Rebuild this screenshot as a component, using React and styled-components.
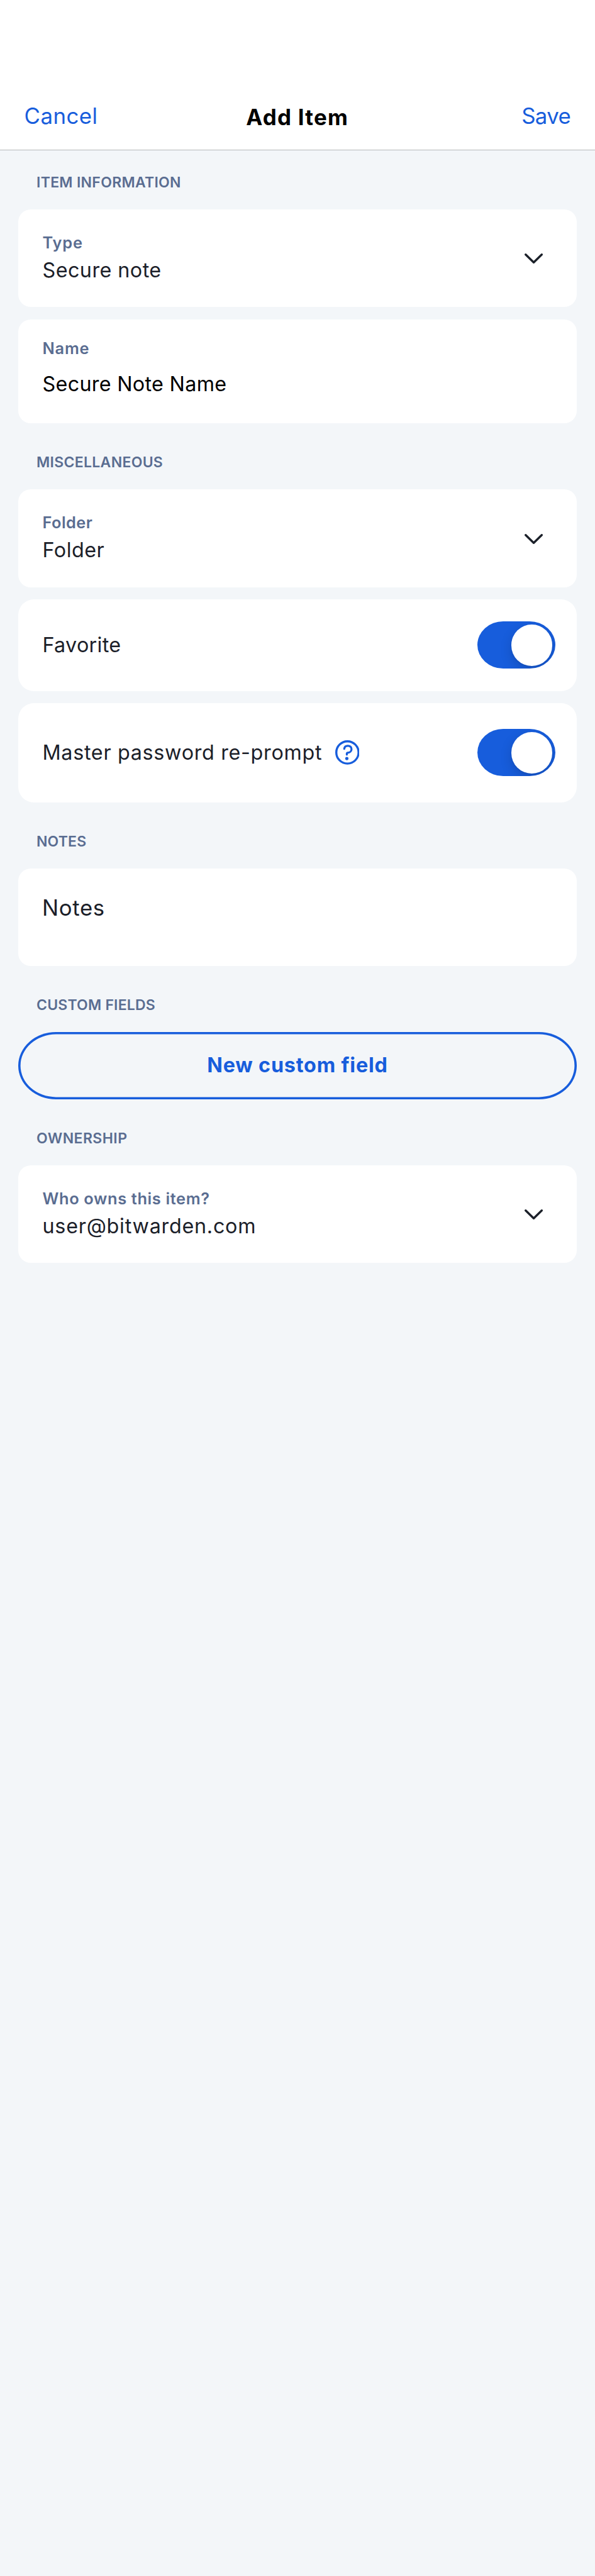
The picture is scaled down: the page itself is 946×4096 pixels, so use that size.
import React from 'react';
import styled, { createGlobalStyle, css } from 'styled-components';

const color = {
  page: '#f3f6f9',
  surface: '#ffffff',
  accent: '#175ddc',
  text: '#1b2029',
  label: '#5a6d91',
  rule: '#b4b7b9',
};

const GlobalStyle = createGlobalStyle`
  * { box-sizing: border-box; }
  body {
    margin: 0;
    background: ${color.page};
    font-family: Inter, "Liberation Sans", sans-serif;
    color: ${color.text};
  }
  button {
    border: 0;
    padding: 0;
    background: none;
    font: inherit;
    cursor: pointer;
  }
`;

const tracking = css`
  letter-spacing: ${(p) => p.$track || 0}px;
`;

const Screen = styled.main`
  width: 946px;
  min-height: 4096px;
  background: ${color.page};
`;

const Header = styled.header`
  display: grid;
  grid-template-columns: 1fr auto 1fr;
  align-items: start;
  height: 239px;
  padding: 162px 39px 0 38.5px;
  background: ${color.surface};
  border-bottom: 1px solid ${color.rule};
`;

const HeaderAction = styled.button`
  justify-self: ${(p) => p.$side};
  color: ${color.accent};
  font-size: 34.8px;
  line-height: 44px;
  white-space: nowrap;
  ${tracking}
`;

const HeaderTitle = styled.h1`
  margin: 2px 0 0;
  color: #000;
  font-size: 34.9px;
  font-weight: 700;
  line-height: 44px;
  ${tracking}
`;

const Form = styled.form`
  padding: 0 29px;
`;

const SectionBlock = styled.section`
  display: flex;
  flex-direction: column;
  gap: 19.4px;
`;

const SectionTitle = styled.h2`
  margin: ${(p) => (p.$first ? 37 : 48.1)}px 0 9.6px 29px;
  color: ${color.label};
  font-size: 23px;
  font-weight: 600;
  line-height: 28px;
  ${tracking}
`;

const Card = styled.div`
  display: flex;
  justify-content: space-between;
  height: ${(p) => p.$height || 155.2}px;
  border-radius: ${(p) => p.$radius || 20}px;
  background: ${color.surface};
`;

const FieldText = styled.div`
  display: flex;
  flex-direction: column;
  gap: ${(p) => p.$gap || 8}px;
  padding: ${(p) => p.$top || 37}px 0 0 38.5px;
`;

const Label = styled.span`
  color: ${color.label};
  font-size: 25.4px;
  font-weight: 600;
  line-height: 32px;
  white-space: nowrap;
  ${tracking}
`;

const Value = styled.span`
  color: ${(p) => (p.$strong ? '#000' : color.text)};
  font-size: 32.3px;
  line-height: 40px;
  white-space: nowrap;
  ${tracking}
`;

const NotesText = styled(Value)`
  padding: 40.6px 0 0 38px;
  font-size: 34.7px;
  line-height: 44px;
`;

const ChevronIcon = styled.svg`
  align-self: center;
  width: 29.1px;
  height: 16.2px;
  margin: 2px 53.6px 0 0;
  fill: none;
  stroke: ${color.text};
`;

const ToggleCard = styled(Card)`
  align-items: center;
  padding: 0 34px 0 38.5px;
`;

const ToggleLabel = styled.div`
  display: flex;
  align-items: center;
  gap: 20.5px;
`;

const HelpIcon = styled.svg`
  width: 38.8px;
  height: 38.8px;
  fill: none;
  stroke: ${color.accent};
`;

const Track = styled.button`
  display: flex;
  align-items: center;
  justify-content: flex-end;
  width: 123.8px;
  height: 75px;
  padding-right: 5px;
  border-radius: 41px / 37.5px;
  background: ${color.accent};
  overflow: hidden;
`;

const Thumb = styled.span`
  width: 65.4px;
  height: 65.4px;
  border-radius: 50%;
  background: ${color.surface};
  box-shadow: 0 7px 19px rgba(0, 0, 0, 0.15), 0 2px 3px rgba(0, 0, 0, 0.05);
`;

const OutlineButton = styled.button`
  height: 106.8px;
  border-radius: 60px / 53.4px;
  box-shadow: inset 0 0 0 3.6px ${color.accent};
  color: ${color.accent};
  font-size: 32.3px;
  font-weight: 700;
  line-height: 40px;
  ${tracking}
`;

function Section({ title, track, first, children }) {
  return (
    <SectionBlock>
      <SectionTitle $first={first} $track={track}>{title}</SectionTitle>
      {children}
    </SectionBlock>
  );
}

function SelectField({ label, labelTrack, value, valueTrack }) {
  return (
    <Card>
      <FieldText>
        <Label $track={labelTrack}>{label}</Label>
        <Value $track={valueTrack}>{value}</Value>
      </FieldText>
      <ChevronIcon viewBox="0 0 36 20" aria-hidden="true">
        <path d="M2.2 2.2 18 17.7 33.8 2.2" strokeWidth="4.2" strokeLinecap="round" strokeLinejoin="round" />
      </ChevronIcon>
    </Card>
  );
}

function Toggle({ label }) {
  return (
    <Track type="button" role="switch" aria-checked="true" aria-label={label}>
      <Thumb />
    </Track>
  );
}

function Help() {
  return (
    <HelpIcon viewBox="0 0 48 48" aria-hidden="true">
      <circle cx="24" cy="24" r="21.9" strokeWidth="4.2" />
      <path
        d="M17.7 17C18.2 13.2 21 11 24.7 11 29 11 32 13.6 32 17.5 32 21.5 28.6 24.3 25 24.5 23.6 24.6 22.8 25.2 22.8 26.5V28.2"
        strokeWidth="4"
        strokeLinecap="round"
      />
      <circle cx="22.8" cy="36" r="3.2" fill={color.accent} stroke="none" />
    </HelpIcon>
  );
}

export default function App() {
  return (
    <>
      <GlobalStyle />
      <Screen>
        <Header>
          <HeaderAction $side="start" $track={0.46}>Cancel</HeaderAction>
          <HeaderTitle $track={1.25}>Add Item</HeaderTitle>
          <HeaderAction $side="end" $track={-0.68}>Save</HeaderAction>
        </Header>
        <Form>
          <Section title="ITEM INFORMATION" track={0.29} first>
            <SelectField label="Type" labelTrack={0.85} value="Secure note" valueTrack={0.45} />
            <Card $height={165.8}>
              <FieldText $top={30.5} $gap={20.6}>
                <Label $track={0.79}>Name</Label>
                <Value $strong $track={0.3}>Secure Note Name</Value>
              </FieldText>
            </Card>
          </Section>

          <Section title="MISCELLANEOUS" track={0.31}>
            <SelectField label="Folder" labelTrack={0.44} value="Folder" valueTrack={0.5} />
            <ToggleCard $height={145.6} $radius={25}>
              <Value $track={0.31}>Favorite</Value>
              <Toggle label="Favorite" />
            </ToggleCard>
            <ToggleCard $height={157.7} $radius={25}>
              <ToggleLabel>
                <Value $track={0.69}>Master password re-prompt</Value>
                <Help />
              </ToggleLabel>
              <Toggle label="Master password re-prompt" />
            </ToggleCard>
          </Section>

          <Section title="NOTES" track={0.16}>
            <Card>
              <NotesText $track={0.65}>Notes</NotesText>
            </Card>
          </Section>

          <Section title="CUSTOM FIELDS" track={0.2}>
            <OutlineButton type="button" $track={0.81}>New custom field</OutlineButton>
          </Section>

          <Section title="OWNERSHIP" track={0.44}>
            <SelectField
              label="Who owns this item?"
              labelTrack={0.63}
              value="user@bitwarden.com"
              valueTrack={0.75}
            />
          </Section>
        </Form>
      </Screen>
    </>
  );
}
